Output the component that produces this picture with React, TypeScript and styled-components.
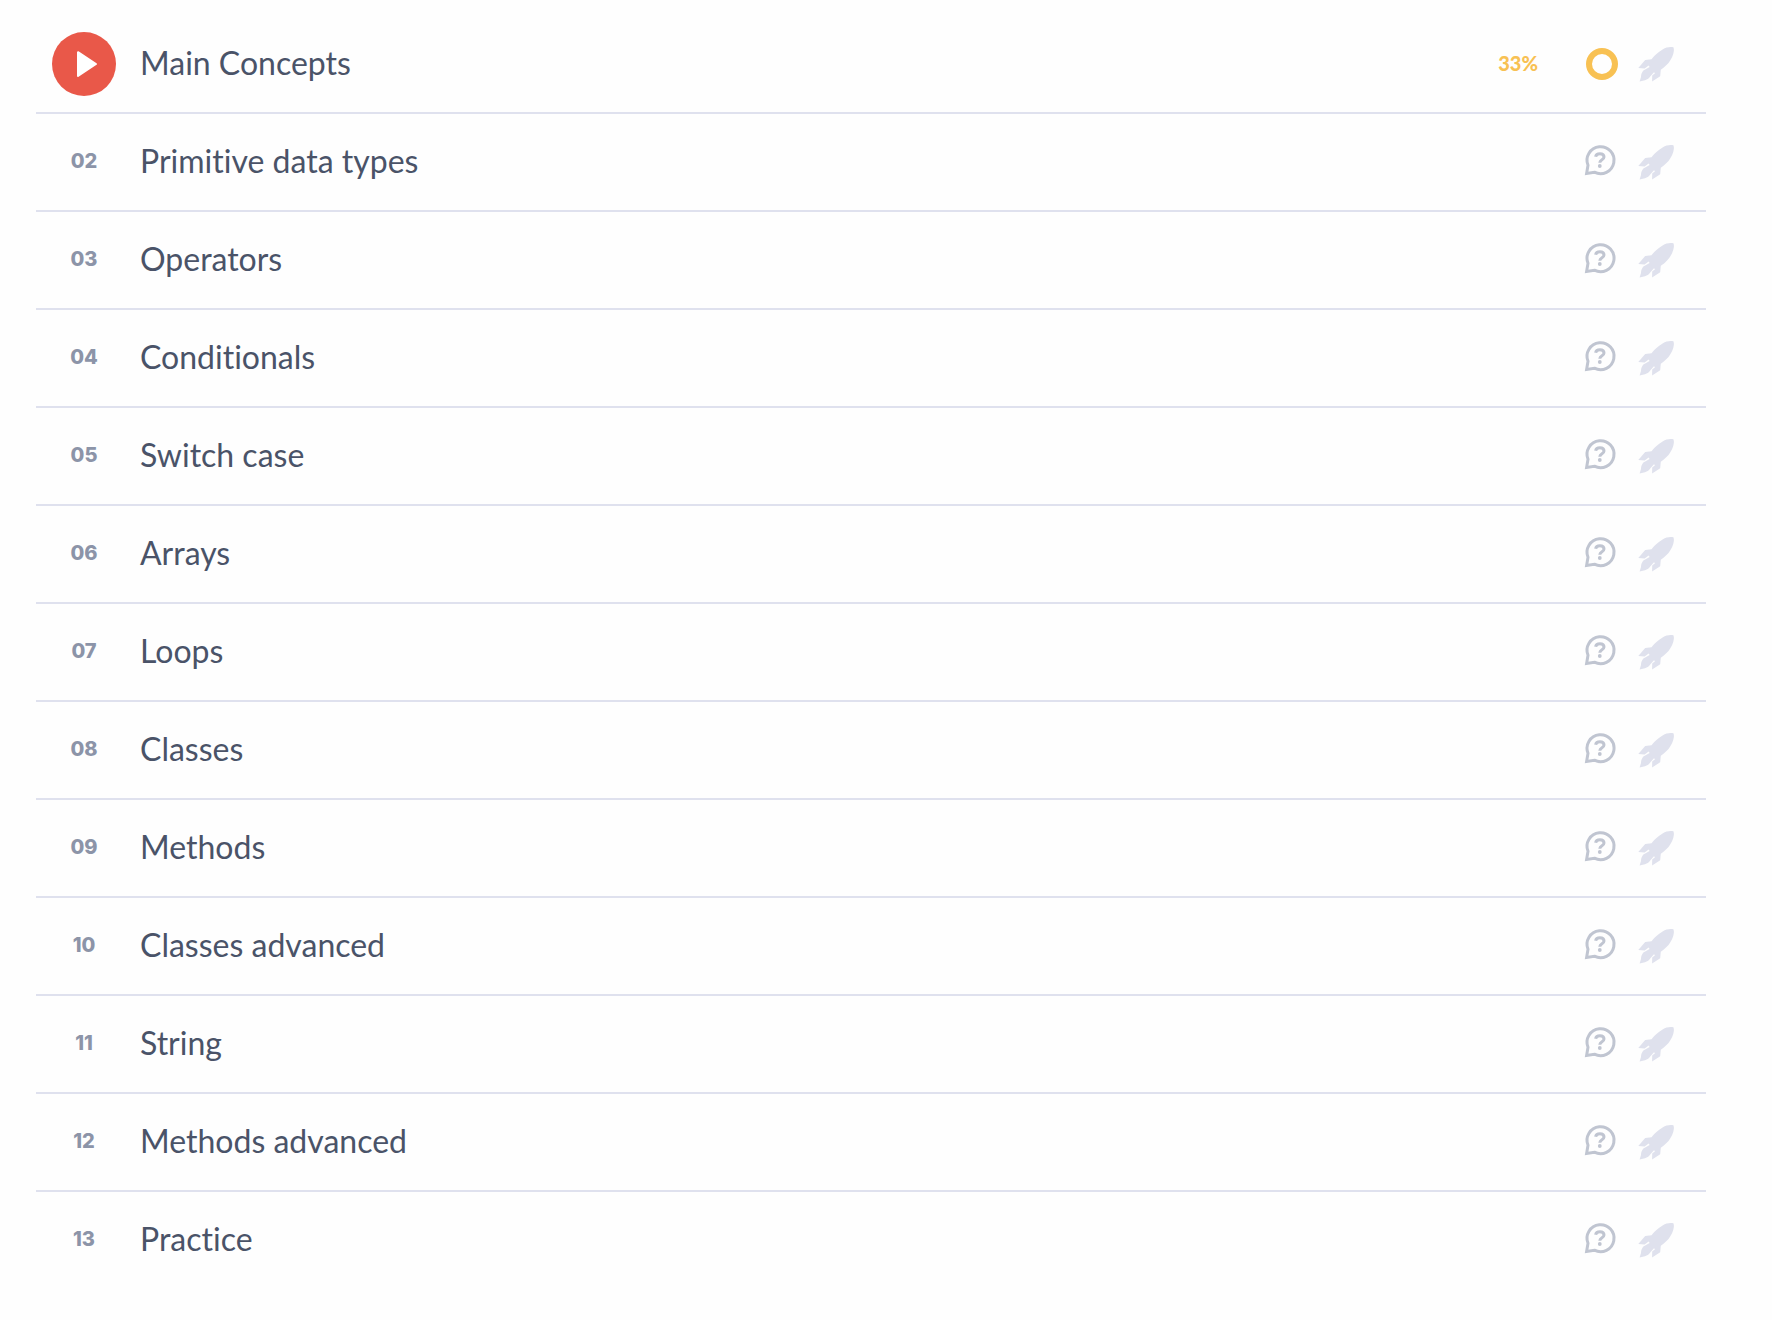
import React from 'react';
import styled, { createGlobalStyle } from 'styled-components';

const GlobalStyle = createGlobalStyle`
  *, *::before, *::after { box-sizing: border-box; }
  body {
    margin: 0;
    background: #fefefe;
    color: #4a5368;
    font-family: Lato, "Liberation Sans", sans-serif;
    font-variant-ligatures: none;
  }
`;

const Page = styled.main`
  padding: 16px 66px 16px 36px;
`;

const TopicList = styled.ol`
  list-style: none;
  margin: 0;
  padding: 0;
`;

const TopicRow = styled.li`
  display: flex;
  align-items: center;
  gap: 24px;
  height: 98px;
  padding: 0 32px 0 16px;
  border-bottom: 2px solid #dfe1ee;

  &:last-child { border-bottom-color: transparent; }
`;

const Marker = styled.div`
  flex: none;
  display: flex;
  justify-content: center;
  width: 64px;
`;

const TopicNumber = styled.span`
  padding-bottom: 2px;
  color: #8c94a8;
  font: 800 20px/24px Inter, "Liberation Sans", sans-serif;
`;

const PlayButton = styled.button`
  display: flex;
  align-items: center;
  justify-content: center;
  width: 64px;
  height: 64px;
  padding: 0;
  border: 0;
  border-radius: 50%;
  background: #e95849;
  cursor: pointer;
`;

const TopicLink = styled.a`
  flex: 1;
  min-width: 0;
  padding-bottom: 2px;
  color: inherit;
  font-size: 32px;
  line-height: 40px;
  text-decoration: none;
`;

const Status = styled.div`
  flex: none;
  display: flex;
  align-items: center;
  gap: 20px;
`;

const Percent = styled.span`
  margin-right: 28px;
  padding-bottom: 2px;
  color: #f8c153;
  font-size: 20px;
  font-weight: 900;
  line-height: 24px;
`;

const Ring = styled.span`
  width: 32px;
  height: 32px;
  border: 6px solid #f8c153;
  border-radius: 50%;
`;

const Icon = styled.svg`
  display: block;
  overflow: visible;
`;

const PlayIcon = () => (
  <Icon width="64" height="64" viewBox="0 0 64 64" aria-hidden="true">
    <path
      d="M26 20.2V44L44 32Z"
      fill="#fff"
      stroke="#fff"
      strokeWidth="2"
      strokeLinejoin="round"
    />
  </Icon>
);

const QuestionIcon = () => (
  <Icon width="32" height="32" viewBox="1 1 32 32" fill="none" stroke="#c0c5d1" role="img" aria-label="Quiz">
    <path d="M1.6 28.4 3 20.2A13.5 13.5 0 1 1 9.4 27.2Z" strokeWidth="3" />
    <path
      d="M10.6 11.8C11 9.8 12.6 8.8 14.9 8.8C17.4 8.8 19 10.1 19 12.1C19 15 14.8 14.6 14.8 17.8"
      strokeWidth="3"
    />
    <circle cx="14.8" cy="21" r="1.9" fill="#c0c5d1" stroke="none" />
  </Icon>
);

const RocketIcon = () => (
  <Icon width="36" height="36" viewBox="0 0 36 36" fill="#dfe1ed" role="img" aria-label="Practice">
    <path d="M35.4 1.2C31.5.6 28.2 1.3 24.6 3.4C20.6 5.8 16.8 9 13.5 13.2L7.2 14L.3 21.9L6.6 22.6L10.6 19.4L11.6 21L5.4 24.6C3.8 26.6 3 28.4 3 31L1.6 35.4L7 34.3C9.4 33.4 11.3 32 12.4 30.2L16 26.2L17 27.3L14.2 29.5L14.1 35.4L22.2 30.2L22.8 23.8C28.6 20 33.4 14.6 35.3 7.8C36 5.2 36.2 3 35.4 1.2Z" />
  </Icon>
);

interface Topic {
  title: string;
  progress?: number;
}

const topics: Topic[] = [
  { title: 'Main Concepts', progress: 33 },
  { title: 'Primitive data types' },
  { title: 'Operators' },
  { title: 'Conditionals' },
  { title: 'Switch case' },
  { title: 'Arrays' },
  { title: 'Loops' },
  { title: 'Classes' },
  { title: 'Methods' },
  { title: 'Classes advanced' },
  { title: 'String' },
  { title: 'Methods advanced' },
  { title: 'Practice' },
];

export default function App() {
  return (
    <>
      <GlobalStyle />
      <Page>
        <TopicList>
          {topics.map(({ title, progress }, index) => {
            const started = progress !== undefined;
            return (
              <TopicRow key={title}>
                <Marker>
                  {started ? (
                    <PlayButton type="button" aria-label={`Continue ${title}`}>
                      <PlayIcon />
                    </PlayButton>
                  ) : (
                    <TopicNumber>{String(index + 1).padStart(2, '0')}</TopicNumber>
                  )}
                </Marker>
                <TopicLink href={`#topic-${index + 1}`}>{title}</TopicLink>
                <Status>
                  {started && <Percent>{progress}%</Percent>}
                  {started ? <Ring /> : <QuestionIcon />}
                  <RocketIcon />
                </Status>
              </TopicRow>
            );
          })}
        </TopicList>
      </Page>
    </>
  );
}
